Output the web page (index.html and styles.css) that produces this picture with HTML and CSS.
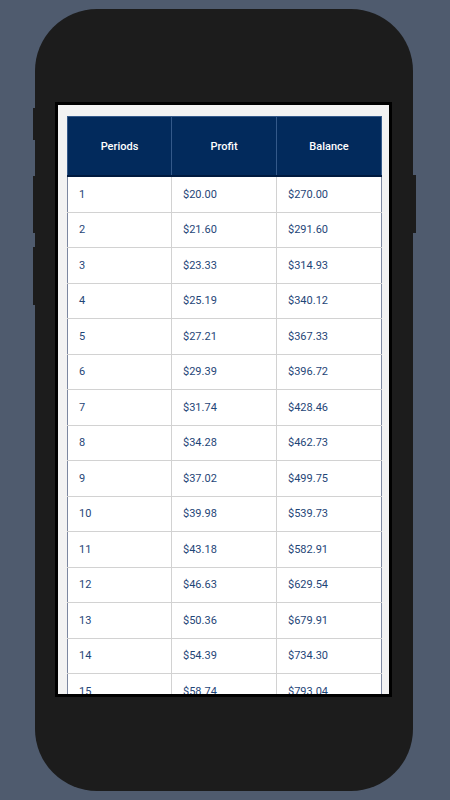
FILE: index.html
```html
<!DOCTYPE html>
<html>
<head>
<meta charset="utf-8">
<link rel="stylesheet" href="styles.css">
</head>
<body>
<div class="stage">
  <div class="phone">
    <span class="btn btn-l1"></span>
    <span class="btn btn-l2"></span>
    <span class="btn btn-l3"></span>
    <span class="btn btn-r1"></span>
    <div class="screen">
      <div class="content">
        <table class="grid">
          <thead>
            <tr><th>Periods</th><th>Profit</th><th>Balance</th></tr>
          </thead>
          <tbody>
            <tr><td>1</td><td>$20.00</td><td>$270.00</td></tr>
            <tr><td>2</td><td>$21.60</td><td>$291.60</td></tr>
            <tr><td>3</td><td>$23.33</td><td>$314.93</td></tr>
            <tr><td>4</td><td>$25.19</td><td>$340.12</td></tr>
            <tr><td>5</td><td>$27.21</td><td>$367.33</td></tr>
            <tr><td>6</td><td>$29.39</td><td>$396.72</td></tr>
            <tr><td>7</td><td>$31.74</td><td>$428.46</td></tr>
            <tr><td>8</td><td>$34.28</td><td>$462.73</td></tr>
            <tr><td>9</td><td>$37.02</td><td>$499.75</td></tr>
            <tr><td>10</td><td>$39.98</td><td>$539.73</td></tr>
            <tr><td>11</td><td>$43.18</td><td>$582.91</td></tr>
            <tr><td>12</td><td>$46.63</td><td>$629.54</td></tr>
            <tr><td>13</td><td>$50.36</td><td>$679.91</td></tr>
            <tr><td>14</td><td>$54.39</td><td>$734.30</td></tr>
            <tr><td>15</td><td>$58.74</td><td>$793.04</td></tr>
            <tr><td>16</td><td>$63.44</td><td>$856.48</td></tr>
          </tbody>
        </table>
      </div>
    </div>
  </div>
</div>
</body>
</html>
```

FILE: styles.css
```css
html, body {
  margin: 0;
  padding: 0;
}
body {
  background: #4f5b6e;
  width: 450px;
  height: 800px;
  overflow: hidden;
  font-family: Roboto, "Liberation Sans", sans-serif;
}
.stage {
  padding: 9px 0 0 35px;
}
.phone {
  position: relative;
  width: 378px;
  height: 782px;
  background: #1c1c1c;
  border-radius: 62px;
  padding: 93px 0 0 20px;
  box-sizing: border-box;
}
.btn {
  position: absolute;
  width: 3px;
  background: #1c1c1c;
}
.btn-l1 { left: -2px; top: 99px; height: 32px; }
.btn-l2 { left: -2px; top: 167px; height: 57px; }
.btn-l3 { left: -2px; top: 238px; height: 58px; }
.btn-r1 { right: -3px; top: 166px; height: 58px; }
.screen {
  width: 337px;
  height: 595px;
  box-sizing: border-box;
  border: 3px solid #000;
  background: #f2f2f2;
  overflow: hidden;
}
.content {
  padding: 11px 7px 0 9px;
}
.grid {
  width: 315px;
  border-collapse: collapse;
  table-layout: fixed;
  border-left: 1px solid #7c87a0;
  border-right: 1px solid #7c87a0;
}
.grid th {
  height: 58px;
  padding: 0;
  background: #022a5c;
  color: #ffffff;
  font-size: 11px;
  font-weight: 500;
  text-align: center;
  border: 1px solid #34598a;
  border-bottom: 2px solid #001a3f;
}
.grid th:nth-child(1) { width: 103px; }
.grid th:nth-child(2) { width: 104px; }
.grid td {
  height: 34.5px;
  padding: 0 0 0 11px;
  background: #ffffff;
  color: #1f4677;
  font-size: 11px;
  text-align: left;
  border: 1px solid #d2d2d2;
  border-top: 0;
}
.grid td:first-child { border-left: 0; }
.grid td:last-child { border-right: 0; }
```
